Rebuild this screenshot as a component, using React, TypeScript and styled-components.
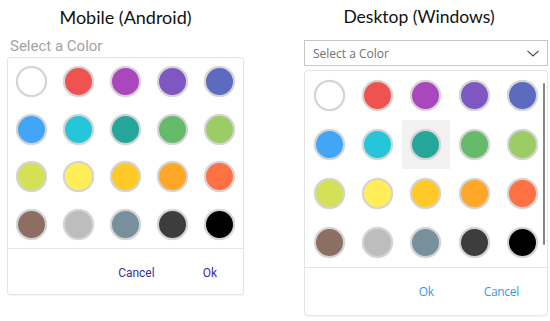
import styled, { createGlobalStyle } from 'styled-components';

const GlobalStyle = createGlobalStyle`
  html, body {
    margin: 0;
    padding: 0;
    background: #ffffff;
  }
  body {
    width: 550px;
    height: 321px;
    overflow: hidden;
  }
`;

const colors = [
  '#ffffff', '#ef5350', '#ab47bc', '#7e57c2', '#5c6bc0',
  '#42a5f5', '#26c6da', '#26a69a', '#66bb6a', '#9ccc65',
  '#d4e157', '#ffee58', '#ffca28', '#ffa726', '#ff7043',
  '#8d6e63', '#bdbdbd', '#78909c', '#3d3d3d', '#000000',
];

const Page = styled.div`
  display: flex;
  align-items: flex-start;
  padding-left: 7px;
  gap: 60px;
`;

const Column = styled.div<{ width: number }>`
  display: flex;
  flex-direction: column;
  width: ${p => p.width}px;
`;

const Title = styled.div<{ shift?: number; size?: number }>`
  font-family: Lato, 'Open Sans', sans-serif;
  font-size: ${p => p.size || 18}px;
  line-height: 24px;
  color: #111111;
  text-align: center;
  padding-top: 5px;
  padding-right: ${p => p.shift || 0}px;
`;

const MobileInput = styled.div`
  font-family: Roboto, sans-serif;
  font-size: 15px;
  line-height: 20px;
  color: #a3a3a3;
  padding: 7px 0 0 3px;
  height: 21px;
`;

const DesktopInput = styled.div`
  margin-top: 11px;
  height: 24px;
  border: 1px solid #c6c6c6;
  display: flex;
  align-items: center;
  justify-content: space-between;
  padding: 0 8px;
  font-family: 'Open Sans', sans-serif;
  font-size: 12px;
  color: #707070;
`;

const Panel = styled.div<{ radius: number; top: number }>`
  position: relative;
  margin-top: ${p => p.top}px;
  border: 1px solid #e4e4e4;
  border-radius: ${p => p.radius}px;
  background: #ffffff;
  box-shadow: 0 1px 1px rgba(0, 0, 0, 0.04);
`;

const Grid = styled.div<{ cell: number; row: number }>`
  display: grid;
  grid-template-columns: repeat(5, ${p => p.cell}px);
  grid-auto-rows: ${p => p.row}px;
  border-bottom: 1px solid #e6e6e6;
`;

const Cell = styled.div<{ hovered?: boolean }>`
  display: flex;
  align-items: center;
  justify-content: center;
  background: ${p => (p.hovered ? '#f2f2f2' : 'transparent')};
`;

const Swatch = styled.div<{ color: string }>`
  width: 27px;
  height: 27px;
  border-radius: 50%;
  background: ${p => p.color};
  border: 2px solid #d4d4d4;
  box-shadow: 0 0 1px rgba(0, 0, 0, 0.15);
`;

const Footer = styled.div<{ height: number; right: number; gap: number }>`
  height: ${p => p.height}px;
  display: flex;
  align-items: center;
  justify-content: flex-end;
  padding-right: ${p => p.right}px;
  gap: ${p => p.gap}px;
`;

const MobileButton = styled.span`
  font-family: Roboto, sans-serif;
  font-size: 12px;
  color: #3e2da3;
  padding-top: 2px;
`;

const DesktopButton = styled.span`
  font-family: 'Open Sans', sans-serif;
  font-size: 12px;
  letter-spacing: -0.3px;
  color: #3a98de;
`;

const ScrollThumb = styled.div`
  position: absolute;
  right: 2px;
  top: 12px;
  width: 2px;
  height: 162px;
  background: #858585;
  border-radius: 1px;
`;

function Chevron() {
  return (
    <svg width='12' height='7' viewBox='0 0 12 7'>
      <path d='M0.5 0.8 L6 6 L11.5 0.8' fill='none' stroke='#444' strokeWidth='1.1' />
    </svg>
  );
}

export default function App() {
  return (
    <>
      <GlobalStyle />
      <Page>
        <Column width={237}>
          <Title>Mobile (Android)</Title>
          <MobileInput>Select a Color</MobileInput>
          <Panel radius={3} top={0}>
            <Grid cell={47} row={47.5}>
              {colors.map(c => (
                <Cell key={c}>
                  <Swatch color={c} />
                </Cell>
              ))}
            </Grid>
            <Footer height={45} right={26} gap={48}>
              <MobileButton>Cancel</MobileButton>
              <MobileButton>Ok</MobileButton>
            </Footer>
          </Panel>
        </Column>
        <Column width={244}>
          <Title shift={14} size={17.5}>Desktop (Windows)</Title>
          <DesktopInput>
            <span>Select a Color</span>
            <Chevron />
          </DesktopInput>
          <Panel radius={4} top={4}>
            <Grid cell={48.4} row={49}>
              {colors.map((c, i) => (
                <Cell key={c} hovered={i === 7}>
                  <Swatch color={c} />
                </Cell>
              ))}
            </Grid>
            <Footer height={47} right={28} gap={50}>
              <DesktopButton>Ok</DesktopButton>
              <DesktopButton>Cancel</DesktopButton>
            </Footer>
            <ScrollThumb />
          </Panel>
        </Column>
      </Page>
    </>
  );
}
